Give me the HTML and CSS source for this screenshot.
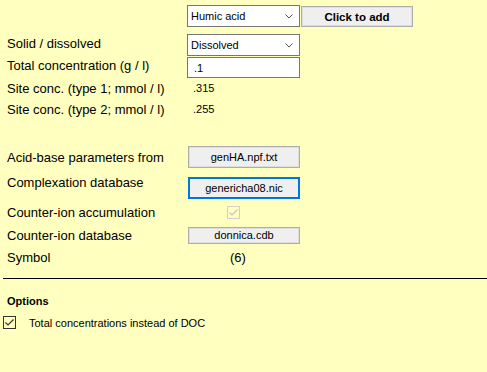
FILE: index.html
```html
<!DOCTYPE html>
<html lang="en">
<head>
    <meta charset="UTF-8">
    <title>Organic matter</title>
    <link rel="stylesheet" href="styles.css">
</head>
<body>
    <div class="form">
        <div class="row">
            <div class="label"></div>
            <div class="controls">
                <label class="select">
                    <select><option>Humic acid</option></select>
                    <svg width="8" height="5" viewBox="0 0 8 5"><path d="M0.5 0.5 L4 4 L7.5 0.5" fill="none" stroke="#555" stroke-width="1"/></svg>
                </label>
                <button class="btn add">Click to add</button>
            </div>
        </div>

        <div class="row r2">
            <div class="label up">Solid / dissolved</div>
            <label class="select">
                <select><option>Dissolved</option></select>
                <svg width="8" height="5" viewBox="0 0 8 5"><path d="M0.5 0.5 L4 4 L7.5 0.5" fill="none" stroke="#555" stroke-width="1"/></svg>
            </label>
        </div>

        <div class="row r3">
            <div class="label up">Total concentration (g / l)</div>
            <input class="field" type="text" value=".1">
        </div>

        <div class="row r4">
            <div class="label">Site conc. (type 1; mmol / l)</div>
            <div class="value">.315</div>
        </div>

        <div class="row">
            <div class="label">Site conc. (type 2; mmol / l)</div>
            <div class="value">.255</div>
        </div>

        <div class="row r6">
            <div class="label">Acid-base parameters from</div>
            <button class="btn">genHA.npf.txt</button>
        </div>

        <div class="row r7">
            <div class="label raised">Complexation database</div>
            <button class="btn focused">genericha08.nic</button>
        </div>

        <div class="row r8">
            <div class="label">Counter-ion accumulation</div>
            <span class="check disabled">
                <svg width="11" height="11" viewBox="0 0 11 11"><path d="M1.5 5.5 L4 8 L9.5 2.5" fill="none" stroke="#c4c4c4" stroke-width="1.2"/></svg>
            </span>
        </div>

        <div class="row r9">
            <div class="label">Counter-ion database</div>
            <button class="btn small">donnica.cdb</button>
        </div>

        <div class="row r10">
            <div class="label">Symbol</div>
            <div class="symbol">(6)</div>
        </div>
    </div>

    <hr class="divider">

    <div class="options">
        <h3>Options</h3>
        <div class="option">
            <span class="check">
                <svg width="11" height="11" viewBox="0 0 11 11"><path d="M1.5 5.5 L4 8 L9.5 2.5" fill="none" stroke="#333" stroke-width="1.2"/></svg>
            </span>
            <span>Total concentrations instead of DOC</span>
        </div>
    </div>
</body>
</html>
```

FILE: styles.css
```css
* {
    margin: 0;
    padding: 0;
    box-sizing: border-box;
}

body {
    font-family: "Liberation Sans", Arial, sans-serif;
    background-color: #ffffc0;
    color: #000;
    width: 487px;
    height: 372px;
    overflow: hidden;
}

.form {
    padding: 5px 0 0 7px;
}

.row {
    display: grid;
    grid-template-columns: 180px auto;
    align-items: center;
    height: 22px;
}

.r2 { margin-top: 7px; }
.r3 { margin-top: 1px; height: 21px; }
.r4 { height: 20px; }
.r6 { margin-top: 26px; }
.r7 { margin-top: 9px; }
.r8 { margin-top: 1px; height: 24px; }
.r9 { margin-top: 1px; height: 20px; }
.r10 { margin-top: 1px; }

.label {
    font-size: 13px;
    line-height: 15px;
}

/* labels that sit a little above their control */
.label.up {
    margin-bottom: 4px;
}

.label.raised {
    align-self: start;
    margin-top: -2px;
}

.controls {
    display: flex;
    align-items: center;
}

.select {
    display: flex;
    align-items: center;
    width: 113px;
    height: 22px;
    border: 1px solid #767676;
    background: #fff;
    padding-right: 6px;
}

.select select {
    appearance: none;
    flex: 1;
    border: none;
    background: transparent;
    font-family: inherit;
    font-size: 11px;
    color: #000;
    padding-left: 3px;
    outline: none;
}

.field {
    width: 113px;
    height: 21px;
    border: 1px solid #767676;
    background: #fff;
    font-family: inherit;
    font-size: 11px;
    padding-left: 6px;
    outline: none;
}

.value {
    font-size: 11px;
    padding-left: 6px;
}

.btn {
    width: 112px;
    height: 22px;
    margin-left: 1px;
    background: #efefef;
    border: 1px solid #adadad;
    box-shadow: inset 0 0 0 1px #dedede;
    font-family: inherit;
    font-size: 11px;
    color: #000;
}

.btn.add {
    height: 21px;
    margin-top: 1px;
    font-weight: bold;
    font-size: 11.5px;
}

.btn.focused {
    border: 2px solid #0078d7;
    box-shadow: none;
}

.btn.small {
    height: 17px;
    line-height: 13px;
}

.check {
    display: inline-flex;
    align-items: center;
    justify-content: center;
    width: 13px;
    height: 13px;
    border: 1px solid #333;
}

.check.disabled {
    margin-left: 40px;
    border-color: #cfcfcf;
}

.symbol {
    font-size: 13px;
    padding-left: 43px;
}

.divider {
    margin: 10px 0 0 3px;
    border: none;
    border-top: 1px solid #000;
}

.options {
    padding-top: 15px;
}

.options h3 {
    font-size: 11px;
    line-height: 14px;
    margin-left: 7px;
}

.option {
    display: flex;
    align-items: center;
    gap: 13px;
    margin: 8px 0 0 3px;
    font-size: 11px;
}
```
